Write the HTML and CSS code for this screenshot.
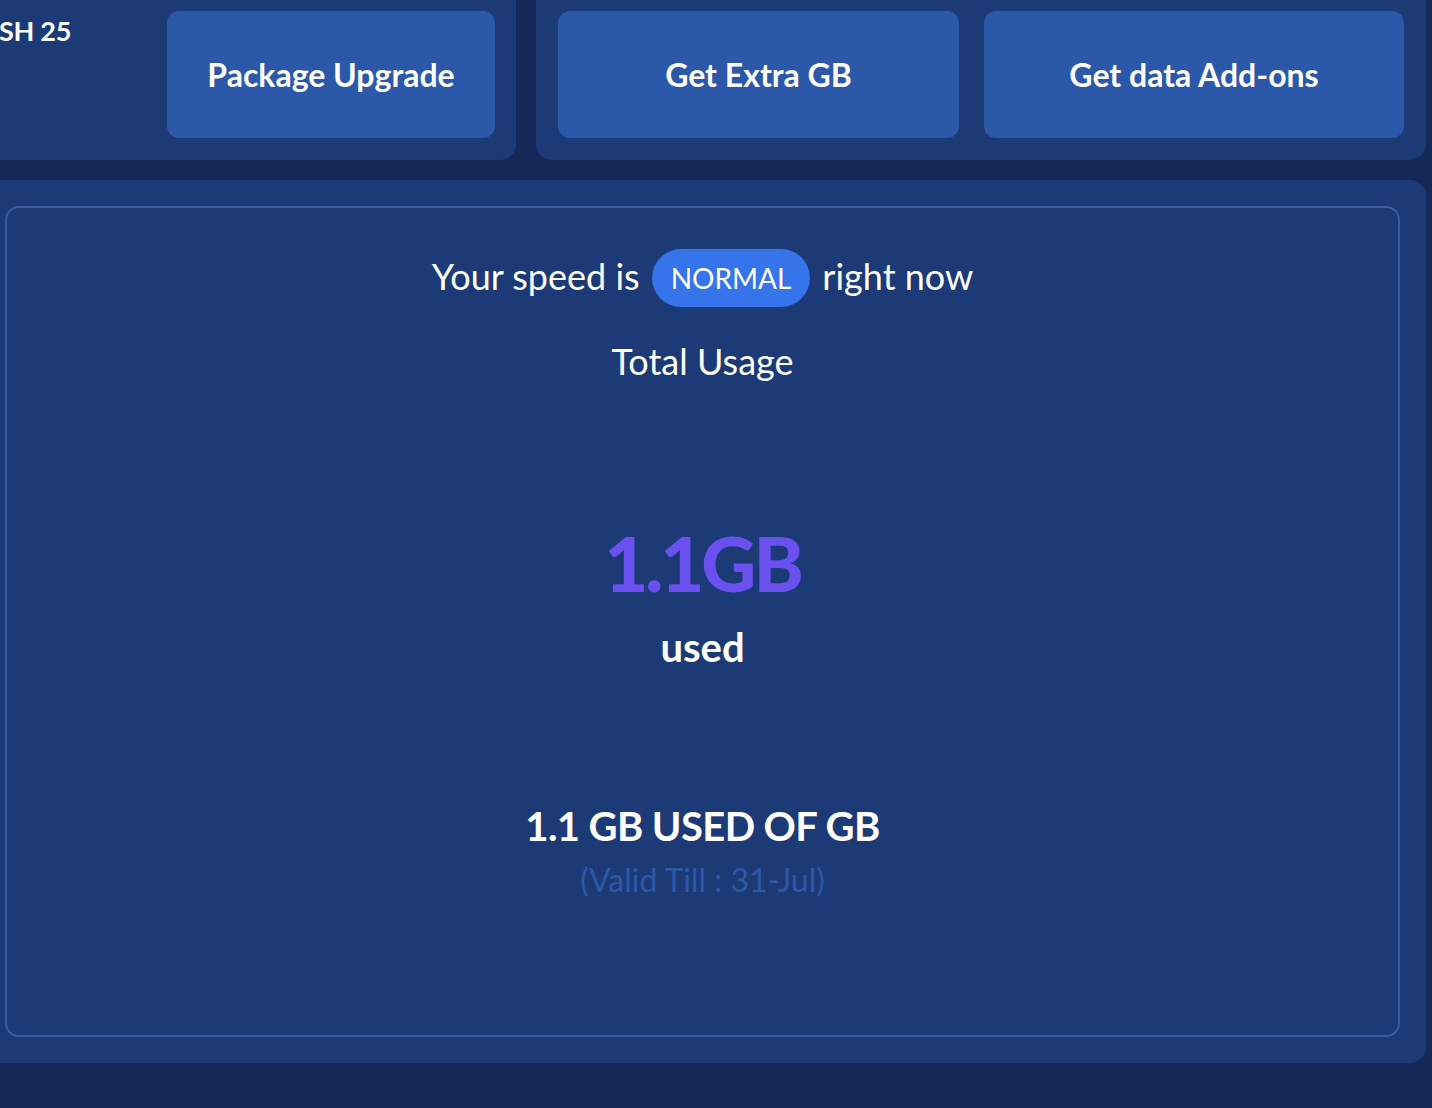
FILE: index.html
```html
<!DOCTYPE html>
<html lang="en">
<head>
<meta charset="utf-8">
<title>Usage</title>
<link rel="stylesheet" href="styles.css">
</head>
<body>
<div class="page">
  <div class="top-row">
    <div class="card card-plan">
      <div class="plan-name">CASH 25</div>
      <button class="btn btn-upgrade">Package Upgrade</button>
    </div>
    <div class="card card-actions">
      <button class="btn btn-extra">Get Extra GB</button>
      <button class="btn btn-addons">Get data Add-ons</button>
    </div>
  </div>
  <div class="card card-usage">
    <div class="usage-box">
      <div class="speed-row">
        <span class="speed-text">Your speed is</span>
        <span class="badge">NORMAL</span>
        <span class="speed-text">right now</span>
      </div>
      <div class="total-label">Total Usage</div>
      <div class="big-value">1.1GB</div>
      <div class="used-label">used</div>
      <div class="summary">1.1 GB USED OF GB</div>
      <div class="validity">(Valid Till : 31-Jul)</div>
    </div>
  </div>
</div>
</body>
</html>
```

FILE: styles.css
```css
html, body {
  margin: 0;
  padding: 0;
  background: #162857;
  overflow: hidden;
}

body {
  font-family: Lato, "Open Sans", "Liberation Sans", sans-serif;
  color: #ffffff;
  width: 1432px;
  height: 1108px;
}

.page {
  display: flex;
  flex-direction: column;
  gap: 20px;
  width: 1466px;
  margin-left: -40px;
  margin-top: -22px;
}

.top-row {
  display: flex;
  gap: 20px;
}

.card {
  background: #1c3a76;
  border-radius: 16px;
  box-sizing: border-box;
}

.card-plan {
  width: 556px;
  height: 182px;
  display: flex;
  justify-content: space-between;
  align-items: flex-start;
  padding: 33px 21px 22px 3px;
}

.plan-name {
  font-weight: 700;
  font-size: 27px;
  line-height: 32px;
  margin-top: 4px;
  letter-spacing: -0.3px;
}

.card-actions {
  width: 890px;
  height: 182px;
  display: flex;
  gap: 25px;
  padding: 33px 22px 22px 22px;
}

.btn {
  border: none;
  background: #2b58a8;
  color: #ffffff;
  font-family: inherit;
  font-weight: 700;
  font-size: 32px;
  border-radius: 12px;
  height: 127px;
  padding: 0;
  cursor: pointer;
}

.btn-upgrade { width: 328px; }
.btn-extra { width: 401px; }
.btn-addons { width: 420px; }

.card-usage {
  height: 883px;
  padding: 26px 26px 26px 45px;
  border-radius: 16px;
}

.usage-box {
  height: 831px;
  box-sizing: border-box;
  border: 2px solid #3a5d9f;
  border-radius: 14px;
  display: flex;
  flex-direction: column;
  align-items: center;
  padding-top: 41px;
}

.speed-row {
  display: flex;
  align-items: center;
  gap: 12px;
  font-size: 36px;
  line-height: 58px;
}

.speed-text {
  line-height: 54px;
  margin-bottom: 4px;
}

.badge {
  background: #3574ea;
  border-radius: 29px;
  height: 58px;
  padding: 0 19px;
  font-size: 28px;
  line-height: 58px;
}

.total-label {
  font-size: 36px;
  line-height: 44px;
  margin-top: 32px;
}

.big-value {
  font-size: 76px;
  font-weight: 900;
  line-height: 96px;
  color: #6b50f0;
  margin-top: 132px;
  letter-spacing: -3px;
}

.used-label {
  font-size: 40px;
  font-weight: 700;
  line-height: 48px;
  margin-top: 12px;
}

.summary {
  font-size: 40px;
  font-weight: 700;
  line-height: 48px;
  margin-top: 131px;
  letter-spacing: -0.6px;
}

.validity {
  font-size: 32px;
  line-height: 40px;
  margin-top: 10px;
  color: #2d58a8;
}
```
